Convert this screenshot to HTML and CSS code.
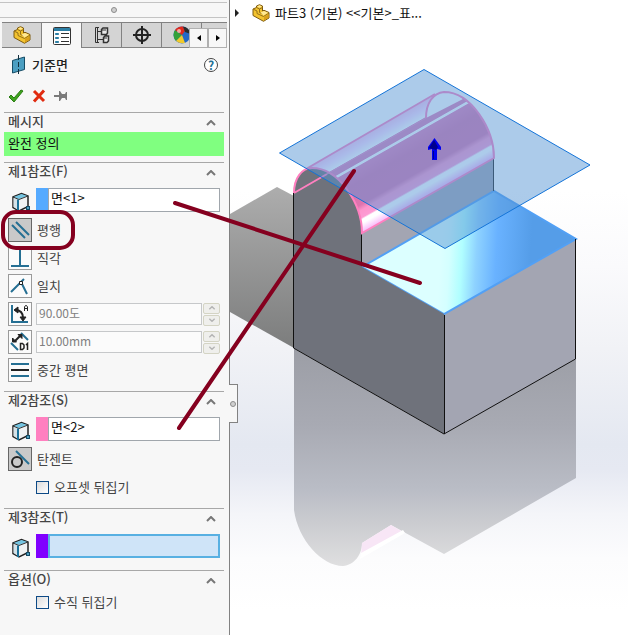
FILE: index.html
```html
<!DOCTYPE html>
<html lang="ko">
<head>
  <meta charset="UTF-8" />
  <meta name="viewport" content="width=device-width, initial-scale=1.0" />
  <title>기준면</title>
  <link rel="stylesheet" href="styles.css">
</head>
<body>

  <!-- 공용 아이콘 -->
  <svg class="defs" aria-hidden="true">
    <symbol id="i-part" viewBox="0 0 18 18">
      <path d="M1 5 4.500 3.500V2L7.500 .7 10.500 2V7L12 6.300 17 8.500V14L11.500 17.300 1 11.500z" fill="#f3c32f" stroke="#7d5a10" />
      <path d="M1 5 5 7 5 9.500 11.500 12.500 17 9M4.500 3.500 7.500 5 10.500 3.500M7.500 5V8.500L11 10" fill="none" stroke="#94701a" />
      <path d="M5 2.400 7.500 1.300 10 2.400 7.500 3.800zM8.500 8.500 12 7 16 8.800 11.500 11.500z" fill="#ffe894" />
      <path d="M12 13v3.500l4.500-2.800v-3.500z" fill="#d99f1b" />
    </symbol>
    <symbol id="i-face" viewBox="0 0 20 20">
      <path d="M2 5 10.500 1.500 17 4V14.500L8 19 2 15.500z" fill="#f0f2f3" stroke="#222" stroke-width="1.500" />
      <path d="M2.500 5 10.500 2 16.500 4 8 7z" fill="#74c5e2" />
      <path d="M2.500 6 7 7.500V18L2.500 15z" fill="#d4e2e8" />
      <path d="M2 5 8 7.500 17 4" fill="none" stroke="#333" />
      <path d="M7 7.500V19" stroke="#1a7199" stroke-width="2" />
      <rect x="15.500" y="14.500" width="3" height="3" fill="#4f9fc0" stroke="#134b66" />
    </symbol>
    <symbol id="i-up" viewBox="0 0 10 6">
      <path d="M1 5 5 1 9 5" fill="none" stroke="currentColor" stroke-width="2" />
    </symbol>
    <symbol id="i-down" viewBox="0 0 10 6">
      <path d="M1 1 5 5 9 1" fill="none" stroke="currentColor" stroke-width="2" />
    </symbol>
  </svg>

  <div class="app">
    <aside class="panel">
      <div class="splitter"><span class="dot"></span></div>

      <nav class="tabs">
        <button class="tab" aria-label="디자인 트리"><svg width="18" height="18"><use href="#i-part" /></svg></button>
        <button class="tab active" aria-label="속성">
          <svg width="18" height="18" viewBox="0 0 18 18">
            <rect x=".5" y=".5" width="17" height="17" rx="1" fill="#fff" stroke="#333" />
            <path d="M1 1h16v3H1z" fill="#2b7ea4" />
            <path d="M2.500 6.500h3v1h-3zM2.500 10.500h3v1h-3zM2.500 14.500h3v1h-3z" fill="#2b7ea4" stroke="#2b7ea4" />
            <path d="M8 6.500h8M8 10.500h8M8 14.500h8" stroke="#333" />
          </svg>
        </button>
        <button class="tab" aria-label="설정">
          <svg width="16" height="18" viewBox="0 0 16 18" fill="#e8e8e8" stroke="#333">
            <path d="M5 1.500H1.500V16.500H5M3.500 2v14M3 5.500h5M3 13.500h7" fill="none" />
            <path d="M7.500 3.500 9 2h4.500v5l-1 1.500H7.500zM9.500 11.500 11 10h3.500v5L13 16.500H9.500z" stroke-width="1.500" />
            <path d="M8 4h4M10 12h3" fill="none" />
          </svg>
        </button>
        <button class="tab" aria-label="치수">
          <svg width="18" height="18" viewBox="0 0 18 18" fill="none" stroke="#222">
            <circle cx="9" cy="9" r="6" stroke-width="2" />
            <path d="M9 0v18M0 9h18" stroke-width="2" />
          </svg>
        </button>
        <button class="tab" aria-label="표시">
          <svg width="18" height="18" viewBox="0 0 18 18">
            <circle cx="9" cy="9" r="8.500" fill="#2569c7" />
            <path d="M9 9 2 4A9 9 0 0 0 3 15z" fill="#34a13a" />
            <path d="M9 9 2 4Q5 0 10 .5L12 5z" fill="#e0291c" />
            <path d="M9 9 3 15Q7 18 12 17z" fill="#f2ca2c" />
            <path d="M10 .5Q16 1 17.500 8L12 6z" fill="#2c2c2c" />
            <circle cx="6" cy="5" r="2" fill="#fff" opacity=".6" />
          </svg>
        </button>
        <div class="tab-scroll">
          <button aria-label="이전 탭"><svg width="4" height="6"><path d="M4 0v6L0 3z" /></svg></button>
          <button aria-label="다음 탭"><svg width="4" height="6"><path d="M0 0v6l4-3z" /></svg></button>
        </div>
      </nav>

      <header class="title">
        <svg width="16" height="20" viewBox="0 0 16 20">
          <path d="M1.500 5.500 13.500 2V14.500L1.500 18z" fill="#4c9fc2" stroke="#174d66" />
          <path d="M7.500 0v20" stroke="#12303e" stroke-dasharray="5 2" />
        </svg>
        <h1>기준면</h1>
        <button class="help" aria-label="도움말">?</button>
      </header>

      <div class="actions">
        <button aria-label="확인"><svg width="16" height="14"><path d="M1 8 3 6 6 9 13 1 15 2 6 13z" fill="#3fa41f" stroke="#2a7d12" /></svg></button>
        <button aria-label="취소"><svg width="14" height="14"><path d="M2 2 12 12M12 1.500 2 12.500" stroke="#e02b10" stroke-width="3" /></svg></button>
        <button aria-label="고정"><svg width="14" height="12"><path d="M0 5h5V1h1l2 3h3l1-2h1v8h-1l-1-2H8l-2 3H5V7H0z" fill="#7a7a7a" /></svg></button>
      </div>

      <section>
        <button class="section-head"><span>메시지</span><svg width="10" height="6"><use href="#i-up" /></svg></button>
        <p class="message">완전 정의</p>
      </section>

      <section>
        <button class="section-head"><span>제1참조(F)</span><svg width="10" height="6"><use href="#i-up" /></svg></button>
        <div class="section-body">
          <div class="face-row">
            <svg width="20" height="20"><use href="#i-face" /></svg>
            <span class="swatch blue"></span>
            <input type="text" value="면&lt;1&gt;" aria-label="제1참조">
          </div>
          <div class="row">
            <button class="relation pressed" id="parallel">
              <svg width="20" height="20" stroke="#256f93" stroke-width="2"><path d="M2 5 15 18M6 2 19 15" /></svg>
            </button>
            <label for="parallel">평행</label>
          </div>
          <div class="row">
            <button class="relation" id="perpendicular">
              <svg width="20" height="20" stroke="#256f93" stroke-width="2"><path d="M10 1v17M1 18h18" /></svg>
            </button>
            <label for="perpendicular">직각</label>
          </div>
          <div class="row">
            <button class="relation" id="coincident">
              <svg width="20" height="20" stroke="#256f93" stroke-width="2" fill="none"><path d="M1 16 14 3M11 6 17 18" /><path d="M9.500 5.500h3v3h-3z" fill="#fff" stroke="#222" stroke-width="1" /></svg>
            </button>
            <label for="coincident">일치</label>
          </div>
          <div class="row">
            <button class="relation" aria-label="각도">
              <svg width="20" height="20" fill="none" stroke="#222"><path d="M2 1v17h16" stroke="#256f93" stroke-width="2" /><path d="M5 6Q13 6 13 14" stroke-width="2" /><path d="M4 6 8 3v6zM13 17l-3-4h6z" fill="#222" /><path d="M14.500 7V3l1-1.500h1l1 1.500v4M14.500 4.500h3" /></svg>
            </button>
            <input class="number" type="text" value="90.00도" aria-label="각도 값" disabled>
            <span class="spinner">
              <button disabled aria-label="각도 증가"><svg width="8" height="4"><use href="#i-up" /></svg></button>
              <button disabled aria-label="각도 감소"><svg width="8" height="4"><use href="#i-down" /></svg></button>
            </span>
          </div>
          <div class="row">
            <button class="relation" aria-label="거리">
              <svg width="20" height="20" fill="none" stroke="#222"><path d="M1 11 8 18M11 1 18 8" stroke="#256f93" stroke-width="2" /><path d="M5 9 11 3" stroke-width="2" /><path d="M2.500 10V6l4 4zM8 2.500h4v4z" fill="#222" /><path d="M10.500 11.500v6h2l1.500-1.500v-3l-1.500-1.500zM16 13l1.500-1.500v6.500" stroke-width="1.500" /></svg>
            </button>
            <input class="number" type="text" value="10.00mm" aria-label="거리 값" disabled>
            <span class="spinner">
              <button disabled aria-label="거리 증가"><svg width="8" height="4"><use href="#i-up" /></svg></button>
              <button disabled aria-label="거리 감소"><svg width="8" height="4"><use href="#i-down" /></svg></button>
            </span>
          </div>
          <div class="row">
            <button class="relation" id="midplane">
              <svg width="20" height="20" stroke="#256f93" stroke-width="2"><path d="M1 4h18M1 16h18" /><path d="M1 10h18" stroke="#222" /></svg>
            </button>
            <label for="midplane">중간 평면</label>
          </div>
        </div>
      </section>

      <section>
        <button class="section-head"><span>제2참조(S)</span><svg width="10" height="6"><use href="#i-up" /></svg></button>
        <div class="section-body">
          <div class="face-row">
            <svg width="20" height="20"><use href="#i-face" /></svg>
            <span class="swatch pink"></span>
            <input type="text" value="면&lt;2&gt;" aria-label="제2참조">
          </div>
          <div class="row">
            <button class="relation pressed" id="tangent">
              <svg width="20" height="20" fill="none" stroke-width="2"><circle cx="7" cy="13" r="5" stroke="#222" /><path d="M6 2 19 15" stroke="#256f93" /></svg>
            </button>
            <label for="tangent">탄젠트</label>
          </div>
          <div class="row check">
            <input type="checkbox" id="flip-offset">
            <label for="flip-offset">오프셋 뒤집기</label>
          </div>
        </div>
      </section>

      <section>
        <button class="section-head"><span>제3참조(T)</span><svg width="10" height="6"><use href="#i-up" /></svg></button>
        <div class="section-body">
          <div class="face-row">
            <svg width="20" height="20"><use href="#i-face" /></svg>
            <span class="swatch violet"></span>
            <input class="selected" type="text" value="" aria-label="제3참조">
          </div>
        </div>
      </section>

      <section>
        <button class="section-head"><span>옵션(O)</span><svg width="10" height="6"><use href="#i-up" /></svg></button>
        <div class="row check">
          <input type="checkbox" id="flip-normal">
          <label for="flip-normal">수직 뒤집기</label>
        </div>
      </section>

      <button class="handle" aria-label="패널 접기"><span class="dot"></span></button>
    </aside>

    <main class="viewport">
      <div class="crumb">
        <svg width="4" height="8"><path d="M0 0v8l4-4z" fill="#222" /></svg>
        <svg class="part" width="18" height="18"><use href="#i-part" /></svg>
        <span>파트3 (기본) &lt;&lt;기본&gt;_표...</span>
      </div>

      <svg class="model" width="398" height="635" viewBox="230 0 398 635">
        <defs>
          <linearGradient id="shadow" x1="0" y1="0" x2="0" y2="1">
            <stop offset="0" stop-color="#adadad" /><stop offset="1" stop-color="#7c7d7d" />
          </linearGradient>
          <linearGradient id="mirror" gradientUnits="userSpaceOnUse" x1="0" y1="350" x2="0" y2="566">
            <stop offset="0" stop-color="#9c9ea6" /><stop offset=".35" stop-color="#a8aab3" />
            <stop offset=".65" stop-color="#babdc6" /><stop offset=".8" stop-color="#cbccd0" /><stop offset="1" stop-color="#dfdfe0" />
          </linearGradient>
          <linearGradient id="top" gradientUnits="userSpaceOnUse" x1="440" y1="260" x2="530" y2="265">
            <stop offset="0" stop-color="#dcffff" /><stop offset=".1" stop-color="#d4ffff" /><stop offset=".24" stop-color="#b0feff" />
            <stop offset=".4" stop-color="#8ed2ff" /><stop offset=".62" stop-color="#69b2ff" /><stop offset="1" stop-color="#559de8" />
          </linearGradient>
          <linearGradient id="round" gradientUnits="userSpaceOnUse" x1="433" y1="96" x2="474.500" y2="169">
            <stop offset="0" stop-color="#f8c8ee" /><stop offset=".08" stop-color="#fbdcfd" /><stop offset=".17" stop-color="#fff" />
            <stop offset=".18" stop-color="#e080b8" /><stop offset=".25" stop-color="#e080b8" />
            <stop offset=".26" stop-color="#fff" /><stop offset=".28" stop-color="#fff" />
            <stop offset=".29" stop-color="#e57fb8" /><stop offset=".45" stop-color="#dc74ad" /><stop offset=".7" stop-color="#de74ae" />
            <stop offset=".76" stop-color="#fd95cc" /><stop offset=".84" stop-color="#fd9bd4" />
            <stop offset=".86" stop-color="#fff" /><stop offset=".9" stop-color="#fff" /><stop offset="1" stop-color="#f8b8fa" />
          </linearGradient>
        </defs>

        <!-- 그림자와 바닥 반사 -->
        <path d="M230 214 277 187 294 196V348L230 312z" fill="url(#shadow)" />
        <path d="M294 347V510C298 540 322 566 343 566 354 565 362 555 362 543L391 525 444 554 576 478V358L444 434z" fill="url(#mirror)" />
        <path d="M362 543 391 525 403 532 361 557z" fill="#f8e6f6" />
        <path d="M361 553 403 530 405 533 360 559z" fill="#fff" />

        <!-- 본체 -->
        <path d="M362 233 494 158V192L362 267z" fill="#a3a5b2" />
        <path d="M444 314 576 239V359L444 434z" fill="#a3a5b2" />
        <path d="M362 267 494 191 576 239 444 314z" fill="url(#top)" stroke="#52a0f5" stroke-width="2" />
        <path d="M306 169 433 96C437 93 441 92 445 92 471 93 494 129 494 158L362 233 320 180z" fill="url(#round)" />
        <path d="M426 118C426 103 433 93 444 92 452 92 458 95 463 99z" fill="#fff" />
        <path d="M294 193C294 178 302 168 312 168 339 168 362 204 362 233V267L444 314V434L294 348z" fill="#6f727b" />
        <path d="M293.500 193V348L444 434 575.500 359V239M444.500 315V434M361.500 233V266" fill="none" stroke="#111" />
        <path d="M493.500 158V191" stroke="#222" />
        <path d="M294 193C294 178 302 168 312 168 339 168 362 204 362 233L494 158C494 129 471 92 444 92 433 93 426 103 426 118M306 169 435 94M294 193 327 174" fill="none" stroke="#ff80c0" stroke-width="2" />
        <path d="M327 174 426 118" stroke="#e98cc4" />

        <!-- 기준면 -->
        <path d="M424 69.500 590 165 445 248.500 279.500 153z" fill="#5695d4" fill-opacity=".49" />
        <path d="M424 69.500 590 165 445 248.500 279.500 153z" fill="none" stroke="#1474d8" />
        <path d="M434.500 138 441 147V150L437 149V160H432V149L428 150V147z" fill="#0000f0" />
        <path d="M434 140 438 147 436 150 429 148zM433 151h1v8h-1z" fill="#00008c" />
      </svg>
    </main>

    <!-- 표시선 -->
    <svg class="notes" width="628" height="635" fill="none" stroke="#85001f" stroke-width="4" stroke-linecap="round">
      <path d="M175 203 420 283M354 171 179 428" />
      <rect x="3" y="212" width="70" height="36" rx="13" />
    </svg>
  </div>

</body>
</html>
```
FILE: styles.css
```css
* {
  box-sizing: border-box;
}

body {
  margin: 0;
  font-family: "Noto Sans CJK KR", "Noto Sans", sans-serif;
  font-size: 13px;
  line-height: 18px;
  color: #444;
}

button {
  padding: 0;
  border: none;
  background: none;
  font: inherit;
  color: inherit;
}

svg {
  display: block;
  flex: none;
}

.defs {
  position: absolute;
  width: 0;
  height: 0;
}

.app {
  position: relative;
  display: flex;
  min-height: 100vh;
}

.panel {
  position: relative;
  flex: none;
  width: 230px;
  background-color: #f7f7f7;
  border-right: 1px solid #828282;
}

.splitter {
  display: flex;
  align-items: center;
  justify-content: center;
  height: 16px;
  margin: 2px 2px 4px 0;
  border-top: 1px solid #c4c4c4;
  border-bottom: 1px solid #c4c4c4;
}

.dot {
  width: 6px;
  height: 6px;
  border: 1px solid #8c8c8c;
  border-radius: 50%;
  background-color: #d0d0d0;
}

/* 탭 */
.tabs {
  position: relative;
  display: flex;
  height: 26px;
  margin: 0 2px;
  background-color: #d4d4d4;
  border-top: 1px solid #828282;
  overflow: hidden;
}

.tab {
  display: flex;
  flex: none;
  align-items: center;
  justify-content: center;
  width: 40px;
  border-right: 1px solid #828282;
  border-bottom: 1px solid #828282;
}

.tab.active {
  background-color: #f7f7f7;
  border-bottom: none;
}

.tab-scroll {
  position: absolute;
  right: 0;
  bottom: 0;
  display: flex;
}

.tab-scroll button {
  display: flex;
  align-items: center;
  justify-content: center;
  width: 19px;
  height: 20px;
  background-color: #f7f7f7;
  border: 1px solid #b0b0b0;
}

.title {
  display: flex;
  align-items: center;
  gap: 5px;
  height: 34px;
  padding: 0 11px;
}

.title h1 {
  flex: 1;
  margin: 0;
  font-size: 13px;
  font-weight: 500;
  color: #222;
}

.help {
  width: 14px;
  height: 14px;
  border: 1px solid #444;
  border-radius: 50%;
  background-color: #fff;
  font-size: 12px;
  font-weight: bold;
  line-height: 12px;
  color: #1f7196;
}

.actions {
  display: flex;
  align-items: center;
  gap: 8px;
  height: 30px;
  padding: 0 8px 2px;
}

section {
  margin: 0 5px 0 4px;
  border-top: 1px solid #a8a8a8;
}

.section-head {
  display: flex;
  align-items: center;
  justify-content: space-between;
  width: 100%;
  height: 19px;
  padding: 0 8px 3px 4px;
  font-weight: 500;
}

.section-head svg {
  margin-top: 3px;
  color: #777;
}

.message {
  height: 24px;
  margin: 0 0 6px;
  padding: 2px 4px;
  background-color: #80ff80;
  color: #111;
}

.section-body {
  padding: 6px 0 9px;
}

.face-row {
  display: flex;
  height: 24px;
  margin-bottom: 6px;
  padding: 0 4px 0 7px;
}

.face-row svg {
  margin: 4px 5px 0 0;
}

.face-row:last-child {
  margin-bottom: 3px;
}

.swatch {
  flex: none;
  width: 12px;
}

.blue {
  background-color: #55aaff;
}

.pink {
  background-color: #ff80c0;
}

.violet {
  background-color: #8000ff;
}

.face-row input {
  flex: 1;
  min-width: 0;
  padding: 0 2px 4px;
  border: 1px solid #a0a6ac;
  background-color: #fff;
  font: inherit;
  color: #111;
}

.face-row .selected {
  border: 2px solid #58b0e2;
  background-color: #cfe4f8;
}

.row {
  display: flex;
  align-items: center;
  height: 24px;
  padding: 0 4px;
}

.row + .row {
  margin-top: 4px;
}

.row label {
  margin-left: 5px;
}

.relation {
  flex: none;
  display: flex;
  align-items: center;
  justify-content: center;
  width: 24px;
  height: 24px;
  border: 1px solid #9a9a9a;
  background-color: #fbfbfb;
}

.relation.pressed {
  border-color: #666;
  background-color: #c9c9c9;
}

.number {
  flex: 1;
  min-width: 0;
  height: 22px;
  margin: 0 1px 0 4px;
  padding: 0 2px 4px;
  border: 1px solid #c6c8ca;
  background-color: #fbfbfb;
  font-family: inherit;
  font-size: 12px;
  color: #808080;
}

.spinner {
  display: flex;
  flex-direction: column;
  gap: 1px;
}

.spinner button {
  display: flex;
  align-items: center;
  justify-content: center;
  width: 17px;
  height: 11px;
  border: 1px solid #d4d4c4;
  border-radius: 2px;
  background-color: #efefec;
  color: #b4b4b4;
}

.check {
  padding-left: 32px;
}

.check input {
  appearance: none;
  width: 13px;
  height: 13px;
  margin: 0;
  border: 1px solid #0d4a86;
  background: linear-gradient(135deg, #dcdcdc, #fff);
}

.handle {
  position: absolute;
  top: 384px;
  right: -9px;
  display: flex;
  align-items: center;
  justify-content: center;
  width: 9px;
  height: 39px;
  border: 1px solid #828282;
  border-left: none;
  background-color: #f7f7f7;
  z-index: 1;
}

/* 모델 영역 */
.viewport {
  position: relative;
  flex: 1;
  min-width: 0;
  overflow: hidden;
  background: linear-gradient(#fff 30%, #fafafc 42%, #f1f2f6 55%, #e4e8f1 70%, #e6e9f2 74%, #f4f5f9 81%, #fcfcfd 88%, #fff 96%);
}

.crumb {
  position: relative;
  display: flex;
  align-items: center;
  height: 26px;
  padding-left: 5px;
  color: #111;
  white-space: nowrap;
}

.crumb .part {
  margin: 0 5px 0 13px;
}

.model {
  position: absolute;
  top: 0;
  left: 0;
}

.notes {
  position: absolute;
  top: 0;
  left: 0;
  z-index: 2;
  pointer-events: none;
}
```
